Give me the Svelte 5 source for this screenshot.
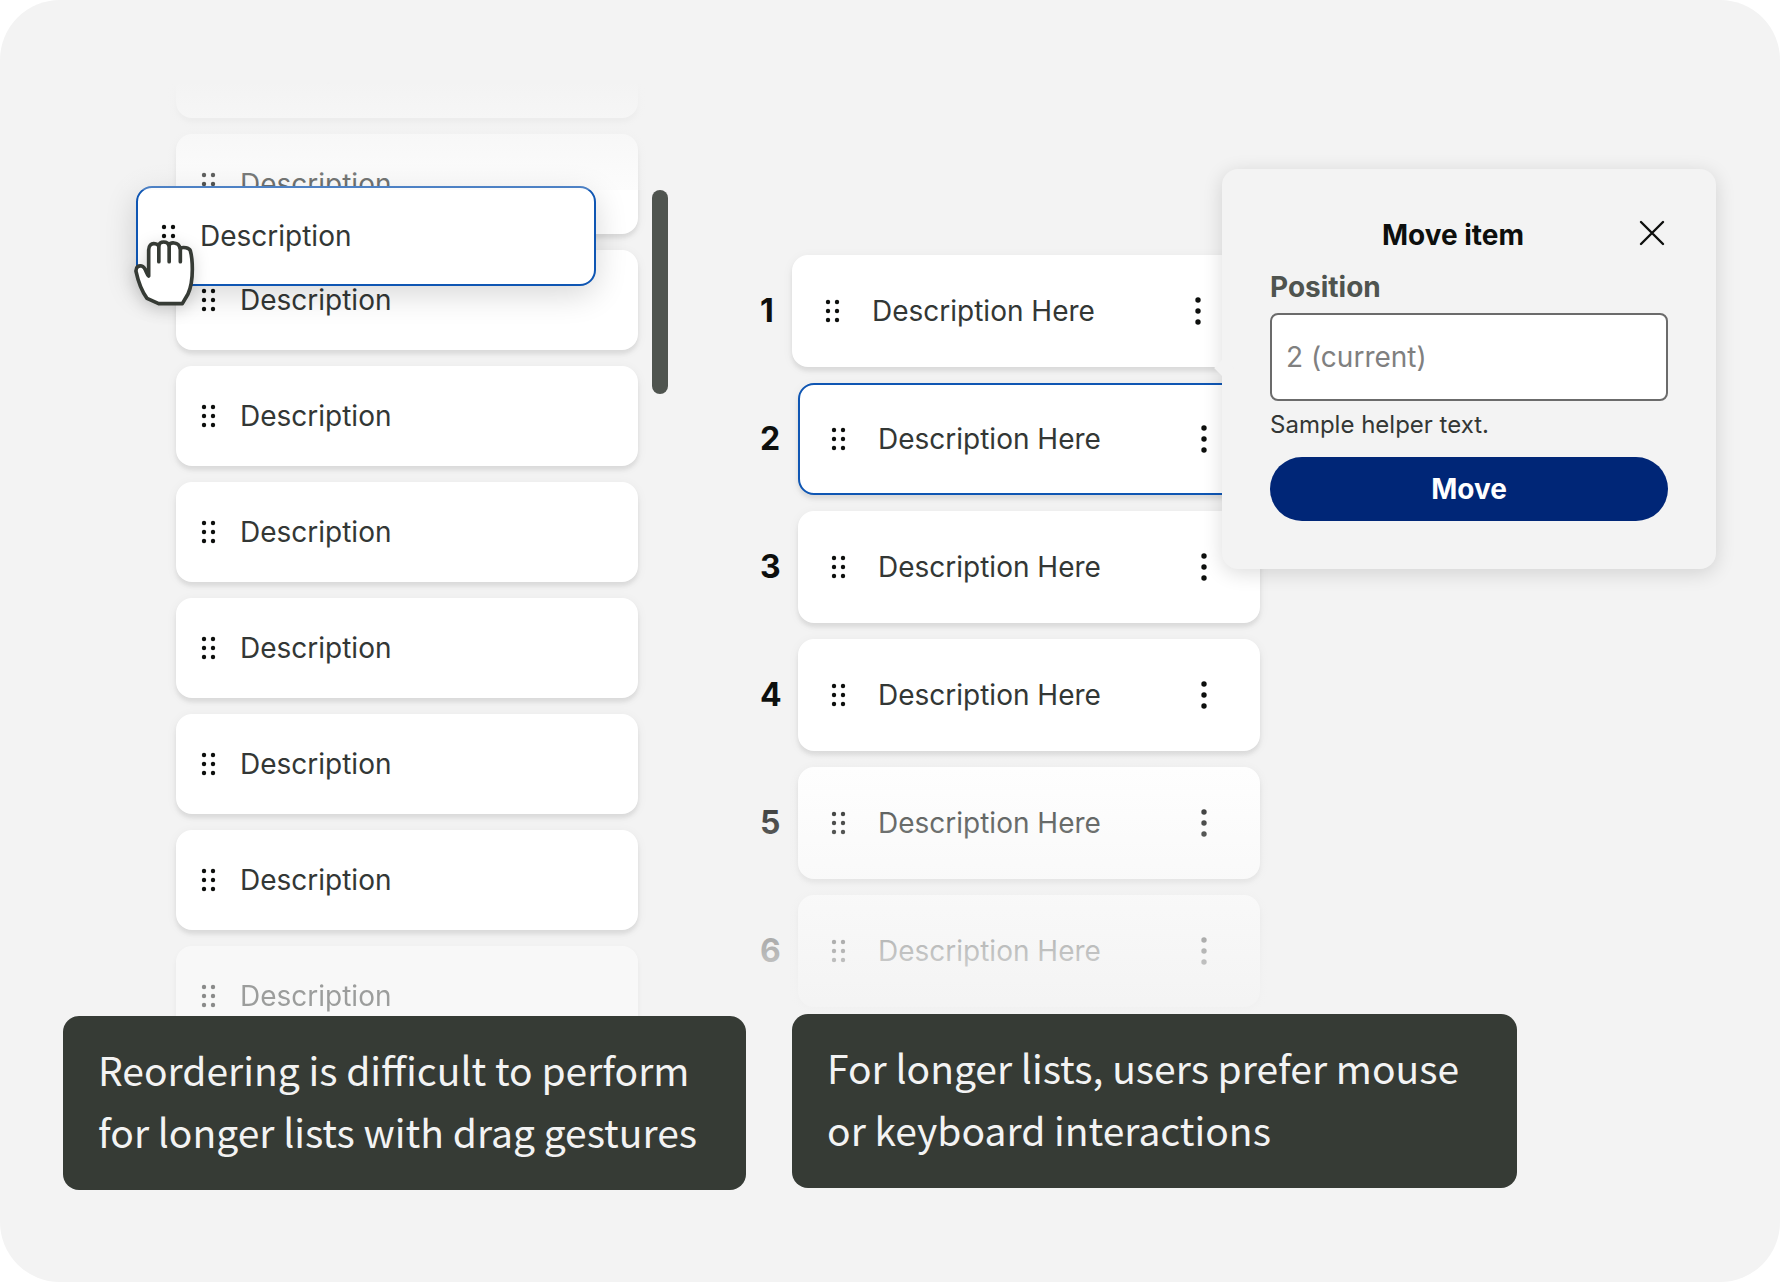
<script>
  const scrollItems = Array.from({ length: 9 }, (_, i) => ({ id: i + 1, label: 'Description' }));
  const rankedItems = Array.from({ length: 6 }, (_, i) => ({ id: i + 1, label: 'Description Here' }));

  const selected = 2;
  let position = '';
</script>

<style>
  :global(body) {
    background-color: #fff;
    margin: 0;
  }

  .board {
    background-color: #f3f3f3;
    border-radius: 60px;
    box-sizing: border-box;
    color: #333735;
    column-gap: 14px;
    display: grid;
    font: 400 28px/36px Inter, 'Liberation Sans', sans-serif;
    grid-template-columns: 683fr 956fr;
    min-height: 100vh;
    overflow: hidden;
    padding: 18px 64px 92px 63px;
  }

  .column {
    min-width: 0;
    position: relative;
  }

  .column-ranked {
    padding-top: 237px;
  }

  ul,
  ol {
    display: flex;
    flex-direction: column;
    gap: 16px;
    list-style: none;
    margin: 0;
    padding: 0;
  }

  button {
    background: none;
    border: none;
    color: inherit;
    cursor: pointer;
    font: inherit;
    padding: 0;
  }

  svg {
    display: block;
  }

  .card {
    align-items: center;
    background-color: #fff;
    border: 2px solid #fff;
    border-radius: 16px;
    box-shadow: 0 4px 4px rgba(0, 0, 0, 0.08), 0 2px 12px rgba(0, 0, 0, 0.05);
    box-sizing: border-box;
    display: flex;
    height: 100px;
  }

  .card.is-active {
    border-color: #0f56b3;
  }

  /* long list, dragged by hand */
  .scroller {
    align-items: flex-start;
    display: flex;
    gap: 14px;
    padding-left: 113px;
    position: relative;
  }

  .scroll-list {
    flex: 0 1 462px;
    position: relative;
  }

  .scroll-list .card,
  .dragged {
    gap: 22px;
    padding-left: 22px;
  }

  .scroll-list li:last-child {
    opacity: 0.45;
  }

  .scroll-thumb {
    background-color: #4f544f;
    border-radius: 8px;
    flex: none;
    height: 204px;
    margin-top: 172px;
    width: 16px;
  }

  .card.dragged {
    box-shadow: 0 8px 32px rgba(0, 0, 0, 0.16);
    left: 73px;
    position: absolute;
    top: 168px;
    width: 460px;
  }

  .hand {
    filter: drop-shadow(0 4px 8px rgba(0, 0, 0, 0.16));
    left: -6px;
    position: absolute;
    top: 50px;
  }

  .fade-top {
    background: linear-gradient(#f3f3f3 82px, rgba(243, 243, 243, 0.25));
    height: 190px;
    left: 60px;
    pointer-events: none;
    position: absolute;
    right: 90px;
    top: -18px;
  }

  /* ranked list, moved through a form */
  .ranked-list li {
    align-items: center;
    display: flex;
    max-width: 500px;
  }

  .rank {
    color: #0d0f0d;
    flex: none;
    font-size: 32px;
    font-weight: 700;
    width: 38px;
  }

  .ranked-list .card {
    flex: 0 1 462px;
    gap: 30px;
    height: 112px;
    padding: 0 36px 0 30px;
  }

  .ranked-list li:first-child .rank {
    width: 32px;
  }

  .ranked-list .label {
    flex: 1;
  }

  .fade-bottom {
    background: linear-gradient(rgba(243, 243, 243, 0.02), rgba(243, 243, 243, 0.96));
    height: 264px;
    left: 0;
    pointer-events: none;
    position: absolute;
    top: 733px;
    width: 520px;
  }

  .caption {
    background-color: #363b35;
    border-radius: 16px;
    box-sizing: border-box;
    color: #f3f3f3;
    font: 400 39px/62px 'Noto Sans CJK SC', 'Noto Sans', sans-serif;
    margin: 0;
    min-height: 174px;
    padding: 22px 35px 28px;
    position: relative;
  }

  .column-scroll .caption {
    margin-top: -30px;
  }

  .column-ranked .caption {
    margin: 7px 0 0 32px;
    max-width: 725px;
  }

  .popover {
    background-color: #f3f3f3;
    border-radius: 16px;
    box-shadow: 0 4px 20px rgba(0, 0, 0, 0.14);
    box-sizing: border-box;
    padding: 48px;
    position: absolute;
    right: 0;
    top: 151px;
    width: 494px;
    z-index: 1;
  }

  .popover::before {
    background-color: #f3f3f3;
    content: '';
    height: 14px;
    left: -5px;
    position: absolute;
    top: 192px;
    transform: rotate(45deg);
    width: 14px;
  }

  .popover-header {
    align-items: flex-start;
    display: flex;
    height: 32px;
  }

  h2 {
    color: #0d0f0d;
    flex: 1;
    font-size: 28px;
    font-weight: 700;
    margin: 0;
    text-align: center;
  }

  .popover label {
    color: #4f544f;
    display: block;
    font-weight: 700;
    margin: 20px 0 8px;
  }

  .popover input {
    background-color: #fff;
    border: 2px solid #6b6b6b;
    border-radius: 8px;
    box-sizing: border-box;
    color: #333735;
    display: block;
    font: inherit;
    height: 88px;
    padding: 0 14px;
    width: 100%;
  }

  .popover input::placeholder {
    color: #808080;
    opacity: 1;
  }

  .helper {
    font-size: 24px;
    line-height: 32px;
    margin: 8px 0 16px;
  }

  .move {
    background-color: #002677;
    border-radius: 32px;
    color: #fff;
    display: block;
    font-weight: 700;
    height: 64px;
    width: 100%;
  }
</style>

{#snippet grip()}
  <button type="button" aria-label="Drag to reorder">
    <svg width="18" height="28" viewBox="0 0 18 28" fill="#0d0f0d">
      {#each [5, 14, 23] as cy}
        <circle cx="4" {cy} r="2.2" />
        <circle cx="13" {cy} r="2.2" />
      {/each}
    </svg>
  </button>
{/snippet}

<main class="board">
  <section class="column column-scroll">
    <div class="scroller">
      <ul class="scroll-list">
        {#each scrollItems as item (item.id)}
          <li class="card">
            {@render grip()}
            <span>{item.label}</span>
          </li>
        {/each}
      </ul>
      <div class="scroll-thumb"></div>

      <div class="card dragged is-active">
        {@render grip()}
        <span>Description</span>
        <svg class="hand" width="64" height="70" viewBox="36 54 192 210" fill="#fff" stroke="#363b35" stroke-width="11" stroke-linejoin="round" stroke-linecap="round">
          <path d="M86 168V90C86 76 94 70 103 71C108 71 113 74 116 77C118 69 125 66 131 66C138 66 145 70 147 76C150 70 157 68 163 69C171 70 178 75 180 84C190 81 207 82 211 92C215 106 217 130 217 148C217 178 212 205 204 222L187 251H116L81 235C65 213 54 182 48 154C47 141 56 136 65 138C77 141 78 160 86 168Z" />
          <path d="M116.500 77V125M147.500 77V125M181 84V125" fill="none" />
        </svg>
      </div>

      <div class="fade-top"></div>
    </div>
    <p class="caption">Reordering is difficult to perform for longer lists with drag gestures</p>
  </section>

  <section class="column column-ranked">
    <ol class="ranked-list">
      {#each rankedItems as item (item.id)}
        <li>
          <span class="rank">{item.id}</span>
          <div class="card" class:is-active={item.id === selected}>
            {@render grip()}
            <span class="label">{item.label}</span>
            <button type="button" aria-label="More actions">
              <svg width="36" height="36" viewBox="0 0 36 36" fill="#0d0f0d">
                {#each [7, 18, 29] as cy}
                  <circle cx="18" {cy} r="2.700" />
                {/each}
              </svg>
            </button>
          </div>
        </li>
      {/each}
    </ol>
    <div class="fade-bottom"></div>
    <p class="caption">For longer lists, users prefer mouse<br>or keyboard interactions</p>

    <form class="popover" on:submit|preventDefault>
      <div class="popover-header">
        <h2>Move item</h2>
        <button type="button" aria-label="Close">
          <svg width="32" height="32" viewBox="0 0 32 32" stroke="#0d0f0d" stroke-width="2.400" stroke-linecap="round">
            <path d="M5 5L27 27M27 5L5 27" />
          </svg>
        </button>
      </div>
      <label for="position">Position</label>
      <input id="position" type="text" placeholder="2 (current)" aria-describedby="position-help" bind:value={position}>
      <p class="helper" id="position-help">Sample helper text.</p>
      <button class="move" type="submit">Move</button>
    </form>
  </section>
</main>
